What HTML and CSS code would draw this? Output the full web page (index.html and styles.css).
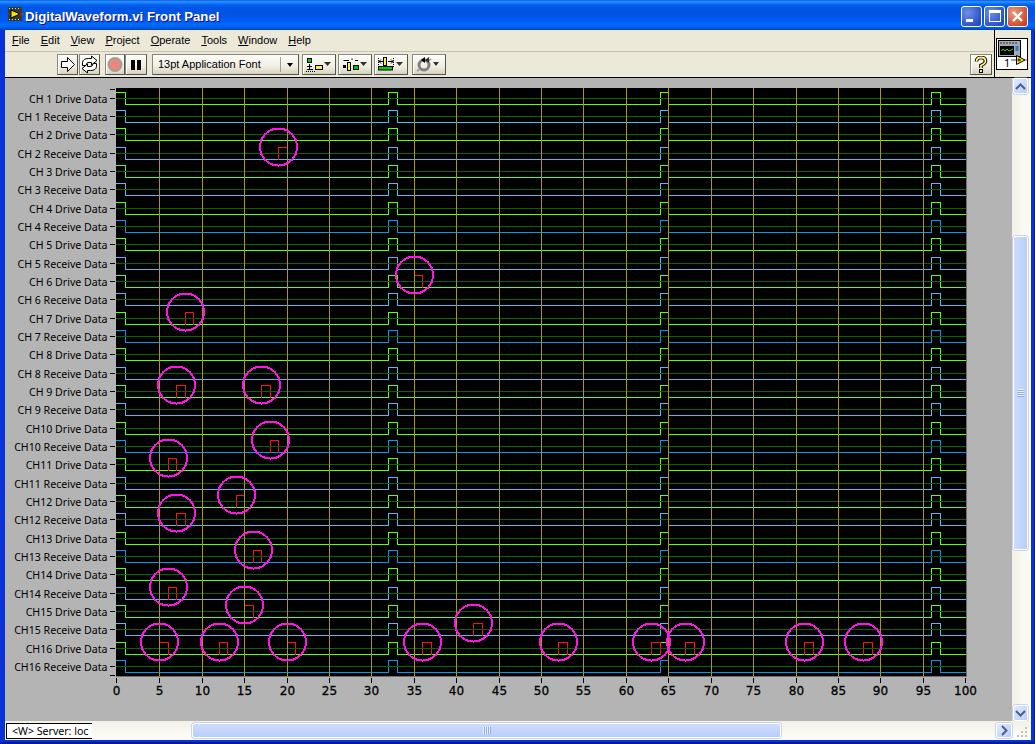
FILE: index.html
```html
<!DOCTYPE html>
<html lang="en">
<head>
  <meta charset="UTF-8">
  <title>DigitalWaveform.vi Front Panel</title>
  <link rel="stylesheet" href="styles.css">
</head>

<body>
  <div class="window">
    <div class="titlebar">
      <svg class="title-icon" width="18" height="18" viewBox="0 0 18 18">
        <rect x="2" y="2" width="14" height="14" fill="#3a3a2a"/>
        <path d="M3 3h1v1H3zM6 3h1v1H6zM9 3h1v1H9zM12 3h1v1h-1zM3 14h1v1H3zM6 14h1v1H6zM9 14h1v1H9zM12 14h1v1h-1z" fill="#d8d8c8"/>
        <path d="M5 5 L14 9 L5 13 Z" fill="#f4e800" stroke="#000"/>
        <path d="M0 9H5" stroke="#2040e0"/>
        <path d="M13 9H18" stroke="#e02020"/>
      </svg>
      <span class="title-text">DigitalWaveform.vi Front Panel</span>
      <div class="win-buttons">
        <div class="win-btn"><span class="glyph-min"></span></div>
        <div class="win-btn"><span class="glyph-max"></span></div>
        <div class="win-btn win-close">
          <svg width="13" height="13" viewBox="0 0 13 13"><path d="M2 2 L11 11 M11 2 L2 11" stroke="#fff" stroke-width="2.4"/></svg>
        </div>
      </div>
    </div>

    <div class="client">
      <div class="top">
        <div class="bars">
          <div class="menubar">
            <span class="menu"><u>F</u>ile</span>
            <span class="menu"><u>E</u>dit</span>
            <span class="menu"><u>V</u>iew</span>
            <span class="menu"><u>P</u>roject</span>
            <span class="menu"><u>O</u>perate</span>
            <span class="menu"><u>T</u>ools</span>
            <span class="menu"><u>W</u>indow</span>
            <span class="menu"><u>H</u>elp</span>
          </div>
          <div class="toolbar">
            <div class="tool tool-run">
              <svg width="21" height="21" viewBox="0 0 21 21"><path d="M4.5 7.5H10.5V3.5L17.5 10.5L10.5 17.5V13.5H4.5Z" fill="#fff" stroke="#000"/></svg>
            </div>
            <div class="tool tool-run">
              <svg width="21" height="21" viewBox="0 0 21 21">
                <path d="M3.5 11.5 V8.5 Q4 4.5 9.5 4.5 H12.5 V2 L18 6.5 L12.5 11 V8.5 H9 Q7.5 8.5 7 11.5Z" fill="#fff" stroke="#000"/>
                <path d="M17.5 9.5 V12.5 Q17 16.5 11.5 16.5 H8.5 V19 L3 14.5 L8.5 10 V12.5 H12 Q13.5 12.5 14 9.5Z" fill="#fff" stroke="#000"/>
              </svg>
            </div>
            <div class="tool tool-record">
              <svg width="20" height="21" viewBox="0 0 20 21"><circle cx="10" cy="10.5" r="6.5" fill="#e8887e" stroke="#a0a098" stroke-width="2"/></svg>
            </div>
            <div class="tool tool-pause">
              <span class="pause-bar"></span><span class="pause-bar"></span>
            </div>
            <div class="font-select">
              <span class="font-name">13pt Application Font</span>
              <span class="font-arrow"><span class="arrow-down"></span></span>
            </div>
            <div class="tool tool-wide">
              <svg width="34" height="21" viewBox="0 0 34 21">
                <rect x="5.5" y="4.5" width="4" height="4" fill="#00d000" stroke="#000"/>
                <path d="M7.5 10V15M5 12.5H10M5 15.5H11" stroke="#000"/>
                <path d="M4 17.5H13" stroke="#000" stroke-dasharray="1 1"/>
                <rect x="13.5" y="11.5" width="7" height="4" fill="#ffec50" stroke="#000"/>
                <path d="M22 8H29L25.5 12Z" fill="#303030"/>
              </svg>
            </div>
            <div class="tool tool-wide">
              <svg width="34" height="21" viewBox="0 0 34 21">
                <path d="M5.5 6.5H11M14 4.5V6M17 6.5H20" stroke="#000"/>
                <rect x="5" y="11" width="3" height="3" fill="#000"/>
                <rect x="9.5" y="8.5" width="3" height="8" fill="#ffec50" stroke="#000"/>
                <rect x="15.5" y="11.5" width="5" height="4" fill="#00c000" stroke="#000"/>
                <path d="M22 8H29L25.5 12Z" fill="#303030"/>
              </svg>
            </div>
            <div class="tool tool-wide">
              <svg width="34" height="21" viewBox="0 0 34 21">
                <path d="M4.5 4V14M19.5 4V14" stroke="#000" stroke-dasharray="1 1"/>
                <rect x="9.5" y="3.5" width="3" height="8" fill="#ffec50" stroke="#000"/>
                <path d="M5 7.5H9M14 7.5H19M5 7.5L7 5.5M5 7.5L7 9.5M19 7.5L17 5.5M19 7.5L17 9.5" stroke="#000"/>
                <rect x="4.5" y="12.5" width="14" height="3.5" fill="#00d000" stroke="#000"/>
                <path d="M22 8H29L25.5 12Z" fill="#303030"/>
              </svg>
            </div>
            <div class="tool tool-wide tool-reorder">
              <svg width="34" height="21" viewBox="0 0 34 21">
                <circle cx="12" cy="11" r="5" fill="none" stroke="#808080" stroke-width="3"/>
                <path d="M8 15L5 17M16 7L19 5" stroke="#a0a0a0" stroke-width="2"/>
                <path d="M13 3L9 6L13 9Z" fill="#000"/>
                <path d="M17 3L13 6L17 9Z" fill="#303030"/>
                <path d="M21 8H27L24 12Z" fill="#303030"/>
              </svg>
            </div>
            <div class="tool tool-help">
              <svg width="14" height="18" viewBox="0 0 14 18">
                <path d="M2.5 5.5Q2.5 1.5 7 1.5Q11.5 1.5 11.5 5Q11.5 7.5 7 9.5V12" fill="none" stroke="#000" stroke-width="3.6"/>
                <path d="M2.5 5.5Q2.5 1.5 7 1.5Q11.5 1.5 11.5 5Q11.5 7.5 7 9.5V12" fill="none" stroke="#ffec80" stroke-width="1.8"/>
                <rect x="5.5" y="13.5" width="3" height="3" fill="#ffec80" stroke="#000"/>
              </svg>
            </div>
          </div>
        </div>
        <div class="connector">
          <div class="vi-icon">
            <svg width="30" height="30" viewBox="0 0 30 30">
              <rect x="1.5" y="1.5" width="22" height="16" fill="#a8a8b0" stroke="#000"/>
              <path d="M3 4H5M6 4H8M9 4H11M12 4H14M15 4H17M18 4H20" stroke="#303030"/>
              <rect x="3" y="7" width="14" height="9" fill="#000"/>
              <path d="M4 12L6 10L8 12L10 10L12 12L16 10" fill="none" stroke="#20e020"/>
              <rect x="18.5" y="7" width="3" height="5" fill="#2080e0"/>
              <path d="M14 21H19" stroke="#2040e0"/>
              <path d="M19.5 16.5L28 21L19.5 25.5Z" fill="#ffec00" stroke="#000"/>
              <path d="M28 21H30" stroke="#e04020"/>
              <path d="M20.5 21H24M22 19.5V22.5" stroke="#000"/>
            </svg>
            <span class="vi-number">1</span>
          </div>
        </div>
      </div>

      <div class="middle">
        <div class="panel">
          <svg id="chart" class="chart" width="1007" height="643" viewBox="5 78 1007 643"></svg>
        </div>
        <div class="vscroll">
          <div class="scroll-btn"><svg width="11" height="7" viewBox="0 0 11 7"><path d="M1 6L5.5 1.5L10 6" fill="none" stroke="#4d6185" stroke-width="2"/></svg></div>
          <div class="vtrack">
            <div class="vthumb"><span class="vgrip"></span></div>
          </div>
          <div class="scroll-btn"><svg width="11" height="7" viewBox="0 0 11 7"><path d="M1 1L5.5 5.5L10 1" fill="none" stroke="#4d6185" stroke-width="2"/></svg></div>
        </div>
      </div>

      <div class="bottom">
        <div class="status"><span>&lt;W&gt; Server: loc</span></div>
        <div class="htrack">
          <div class="hthumb"><span class="hgrip"></span></div>
        </div>
        <div class="scroll-btn"><svg width="7" height="11" viewBox="0 0 7 11"><path d="M1 1L5.5 5.5L1 10" fill="none" stroke="#4d6185" stroke-width="2"/></svg></div>
        <div class="resize-corner">
          <svg width="12" height="12" viewBox="0 0 12 12"><path d="M9 1h2v2H9zM5 5h2v2H5zM9 5h2v2H9zM1 9h2v2H1zM5 9h2v2H5zM9 9h2v2H9z" fill="#c4c2b4"/></svg>
        </div>
      </div>
    </div>
  </div>

  <script src="chart.js"></script>
</body>
</html>
```

FILE: styles.css
```css
body {
  margin: 0;
  width: 1035px;
  height: 744px;
  overflow: hidden;
  font-family: "Noto Sans", sans-serif;
  font-size: 11px;
  color: #000;
}

.window {
  width: 1035px;
  height: 744px;
  display: flex;
  flex-direction: column;
  background: #0831d9;
  box-shadow: inset 0 -2px 0 #001a9c, inset -1px 0 0 #001a9c;
}

/* title bar */
.titlebar {
  height: 30px;
  flex: none;
  display: flex;
  align-items: center;
  padding: 0 7px 0 6px;
  background: linear-gradient(to bottom, #0058ee 0, #3593ff 6%, #127dff 10%, #0262ee 16%, #0057e5 24%, #0054e3 40%, #0055eb 56%, #005bf5 70%, #026afe 82%, #0062ef 90%, #0052d6 96%, #0040ab 100%);
}

.title-icon {
  flex: none;
  margin-top: -2px;
}

.title-text {
  margin-left: 1px;
  margin-top: 2px;
  font-family: "Liberation Sans", sans-serif;
  font-size: 13.2px;
  font-weight: bold;
  color: #fff;
  text-shadow: 1px 1px 0 #0f1089;
}

.win-buttons {
  margin-left: auto;
  display: flex;
  gap: 2px;
  margin-top: 2px;
}

.win-btn {
  width: 19px;
  height: 19px;
  border: 1px solid #fff;
  border-radius: 3px;
  background: radial-gradient(circle at 30% 30%, #6d8fe8, #2a50cc 75%, #2144b8);
  display: flex;
  align-items: center;
  justify-content: center;
}

.win-close {
  background: radial-gradient(circle at 30% 30%, #e99a7f, #d2502e 70%, #b8341a);
}

.glyph-min {
  width: 7px;
  height: 3px;
  background: #fff;
  margin: 8px 5px 0 0;
}

.glyph-max {
  width: 10px;
  height: 8px;
  border: 1px solid #fff;
  border-top-width: 3px;
}

/* everything inside the blue frame */
.client {
  flex: 1;
  margin: 0 4px 4px 5px;
  display: flex;
  flex-direction: column;
  background: #ece9d8;
  min-height: 0;
}

.top {
  height: 47px;
  flex: none;
  display: flex;
  border-bottom: 1px solid #000;
}

.bars {
  flex: 1;
  display: flex;
  flex-direction: column;
}

.menubar {
  height: 22px;
  flex: none;
  display: flex;
  align-items: center;
  gap: 11px;
  padding: 0 0 1px 7px;
  box-sizing: border-box;
  border-bottom: 1px solid #c5c2b0;
  font-family: "Liberation Sans", sans-serif;
  font-size: 11px;
}

.menu u {
  text-underline-offset: 1px;
}

.toolbar {
  flex: 1;
  display: flex;
  align-items: center;
  padding: 0 2px 0 52px;
}

.tool {
  height: 21px;
  box-sizing: border-box;
  display: flex;
  align-items: center;
  justify-content: center;
  border: 1px solid #55554c;
  border-top-color: #8a8a80;
  border-left-color: #8a8a80;
  background: linear-gradient(to bottom, #fdfdf8, #f0eee2 60%, #d6d2c0);
  box-shadow: inset 1px 1px 0 #fff;
  overflow: hidden;
}

.tool svg {
  flex: none;
}

.tool-run {
  width: 21px;
  margin-right: 1px;
}

.tool-record {
  width: 20px;
  margin-left: 4px;
}

.tool-pause {
  width: 22px;
  gap: 2px;
}

.pause-bar {
  width: 4px;
  height: 10px;
  background: #000;
}

.font-select {
  width: 147px;
  height: 21px;
  box-sizing: border-box;
  margin-left: 5px;
  display: flex;
  align-items: center;
  border: 1px solid #55554c;
  border-top-color: #8a8a80;
  border-left-color: #8a8a80;
  background: linear-gradient(to bottom, #fdfdf8, #f0eee2 60%, #d6d2c0);
}

.font-name {
  flex: 1;
  padding: 0 0 1px 5px;
  font-family: "Liberation Sans", sans-serif;
  font-size: 11px;
}

.font-arrow {
  width: 17px;
  height: 15px;
  border-left: 1px solid #a0a090;
  display: flex;
  align-items: center;
  justify-content: center;
}

.arrow-down {
  width: 0;
  height: 0;
  border-left: 3.5px solid transparent;
  border-right: 3.5px solid transparent;
  border-top: 4px solid #000;
}

.tool-wide {
  width: 34px;
  margin-left: 2px;
}

.font-select + .tool-wide {
  margin-left: 3px;
}

.tool-reorder {
  margin-left: 4px;
}

.tool-help {
  width: 22px;
  margin-left: auto;
}

.connector {
  width: 37px;
  flex: none;
  display: flex;
  align-items: center;
  border-left: 1px solid #000;
  box-sizing: border-box;
  padding-left: 1px;
}

.vi-icon {
  width: 32px;
  height: 32px;
  box-sizing: border-box;
  border: 1px solid #000;
  background: #fff;
  position: relative;
}

.vi-icon svg {
  display: block;
}

.vi-number {
  position: absolute;
  left: 7px;
  bottom: 1px;
  font-size: 11px;
  line-height: 10px;
}

/* grey panel and the scroll bars */
.middle {
  flex: 1;
  min-height: 0;
  display: flex;
}

.panel {
  flex: 1;
  background: #b4b4b4;
  overflow: hidden;
}

.chart {
  display: block;
}

.chart text {
  font-family: "Noto Sans", sans-serif;
}

.chart .row-label {
  font-size: 10.6px;
  text-anchor: end;
}

.chart .axis-label {
  font-family: "DejaVu Sans", sans-serif;
  font-size: 12px;
  text-anchor: middle;
  stroke: #000;
  stroke-width: 0.3px;
}

.vscroll {
  width: 19px;
  flex: none;
  display: flex;
  flex-direction: column;
  align-items: center;
  background: linear-gradient(to right, #f3f1e6, #fdfdfa);
  padding-right: 3px;
  box-sizing: border-box;
}

.scroll-btn {
  width: 15px;
  height: 16px;
  flex: none;
  box-sizing: border-box;
  display: flex;
  align-items: center;
  justify-content: center;
  border: 1px solid #fff;
  border-radius: 2px;
  background: linear-gradient(135deg, #e2ebfe, #b8cdf8);
  box-shadow: 0 0 0 0.5px #9db4e6;
}

.vtrack {
  flex: 1;
  width: 100%;
  display: flex;
  flex-direction: column;
  align-items: center;
  padding: 142px 0 155px;
  box-sizing: border-box;
}

.vthumb {
  flex: 1;
  width: 15px;
  box-sizing: border-box;
  border: 1px solid #fff;
  border-radius: 2px;
  background: linear-gradient(to right, #cddcfb, #b9cef8);
  box-shadow: 0 0 0 0.5px #9db4e6;
  display: flex;
  align-items: center;
  justify-content: center;
}

.vgrip {
  width: 7px;
  height: 8px;
  background: repeating-linear-gradient(to bottom, #eef3fe 0, #eef3fe 1px, #8fadee 1px, #8fadee 2px);
}

.bottom {
  height: 19px;
  flex: none;
  display: flex;
  align-items: center;
  background: linear-gradient(to bottom, #f3f1e6, #fdfdfa);
  padding-left: 1px;
}

.status {
  width: 86px;
  height: 16px;
  flex: none;
  box-sizing: border-box;
  border: 1px solid #000;
  border-right: 0;
  background: #fff;
  white-space: nowrap;
  padding-left: 5px;
  font-size: 10.6px;
  line-height: 14px;
}

.htrack {
  flex: 1;
  height: 100%;
  display: flex;
  align-items: center;
  padding: 0 215px 0 100px;
  box-sizing: border-box;
}

.hthumb {
  flex: 1;
  height: 15px;
  box-sizing: border-box;
  border: 1px solid #fff;
  border-radius: 2px;
  background: linear-gradient(to bottom, #cddcfb, #b9cef8);
  box-shadow: 0 0 0 0.5px #9db4e6;
  display: flex;
  align-items: center;
  justify-content: center;
}

.hgrip {
  width: 8px;
  height: 7px;
  background: repeating-linear-gradient(to right, #eef3fe 0, #eef3fe 1px, #8fadee 1px, #8fadee 2px);
}

.bottom .scroll-btn {
  width: 16px;
  height: 15px;
}

.resize-corner {
  width: 19px;
  height: 100%;
  flex: none;
  display: flex;
  align-items: flex-end;
  justify-content: flex-end;
  padding: 0 3px 2px 0;
  box-sizing: border-box;
}
```

FILE: chart.js
```js
const chart = document.getElementById("chart");
const PLOT = { left: 116, right: 966, top: 88, bottom: 676 };
const ROWS = 32;

const GREEN = "#62ff00";
const BLUE = "#4cbcf4";
const DEEP_BLUE = "#0c96ea";
const GRID_H = "#0a6400";
const GRID_V = "#b4960c";
const RED = "#ff1010";
const MAGENTA = "#ff14e6";

// missed samples: [row, x value]
const errors = [
  [3, 19], [10, 35], [12, 8], [16, 7], [16, 17], [19, 18], [20, 6], [22, 14],
  [23, 7], [25, 16], [27, 6], [28, 15], [29, 42], [30, 5], [30, 12], [30, 20],
  [30, 36], [30, 52], [30, 63], [30, 67], [30, 81], [30, 88]
];

const xAt = (u) => Math.round(116.85 + 8.484 * u);
const yAt = (row) => Math.floor(98.3 + 18.33 * row);

function add(tag, attrs, text) {
  const el = document.createElementNS("http://www.w3.org/2000/svg", tag);
  for (const k in attrs) el.setAttribute(k, attrs[k]);
  if (text) el.textContent = text;
  chart.appendChild(el);
  return el;
}

function stroke(d, color, width) {
  add("path", { d: d, fill: "none", stroke: color, "stroke-width": width || 1, "shape-rendering": "crispEdges" });
}

function rowLabel(row) {
  const ch = Math.floor(row / 2) + 1;
  const name = ch < 10 ? "CH " + ch : "CH" + ch;
  return name + (row % 2 ? " Receive Data" : " Drive Data");
}

function rowColor(row) {
  if (row % 2 === 0) return GREEN;
  return row > 1 && (row - 1) % 6 === 0 ? DEEP_BLUE : BLUE;
}

add("rect", {
  x: PLOT.left, y: PLOT.top,
  width: PLOT.right - PLOT.left, height: PLOT.bottom - PLOT.top,
  fill: "#000"
});
stroke(`M${PLOT.left} ${PLOT.bottom + 0.5}H${PLOT.right + 0.5}V${PLOT.top}`, "#707070");

// traces
for (let row = 0; row < ROWS; row++) {
  const hi = yAt(row) - 5.5;
  const lo = yAt(row) + 6.5;
  let d = `M${PLOT.left} ${hi}H${xAt(1) + 0.5}V${lo}`;
  [32, 64, 96].forEach(u => {
    d += `H${xAt(u) + 0.5}V${hi}H${xAt(u + 1) + 0.5}V${lo}`;
  });
  d += `H${PLOT.right}`;
  stroke(d, rowColor(row));
}

errors.forEach(([row, u]) => {
  const hi = yAt(row) - 5.5;
  const lo = yAt(row) + 6.5;
  stroke(`M${xAt(u) + 0.5} ${lo}V${hi}H${xAt(u + 1) + 0.5}V${lo}`, RED);
});

// grid goes over the traces, the traces' edges vanish under it
for (let row = 0; row < ROWS; row++) {
  stroke(`M${PLOT.left} ${yAt(row) + 0.5}H${PLOT.right}`, GRID_H);
}
for (let u = 5; u < 100; u += 5) {
  stroke(`M${xAt(u) + 0.5} ${PLOT.top}V${PLOT.bottom}`, GRID_V);
}

errors.forEach(([row, u]) => {
  add("circle", {
    cx: xAt(u) + 0.5, cy: yAt(row) - 6, r: 18.5,
    fill: "none", stroke: MAGENTA, "stroke-width": 2, "shape-rendering": "crispEdges"
  });
});

// y axis
[89, 675].forEach(y => stroke(`M110 ${y + 0.5}H115`, "#000"));
for (let row = 0; row < ROWS; row++) {
  stroke(`M110 ${yAt(row) + 0.5}H115`, "#000");
  add("text", { class: "row-label", x: 107.5, y: yAt(row) + 5 }, rowLabel(row));
}

// x axis
for (let u = 0; u <= 100; u += 5) {
  const x = u === 0 ? 116 : u === 100 ? 965 : xAt(u);
  stroke(`M${x + 0.5} 678V683`, "#000");
  add("text", { class: "axis-label", x: x + 0.5, y: 695 }, String(u));
}
```
